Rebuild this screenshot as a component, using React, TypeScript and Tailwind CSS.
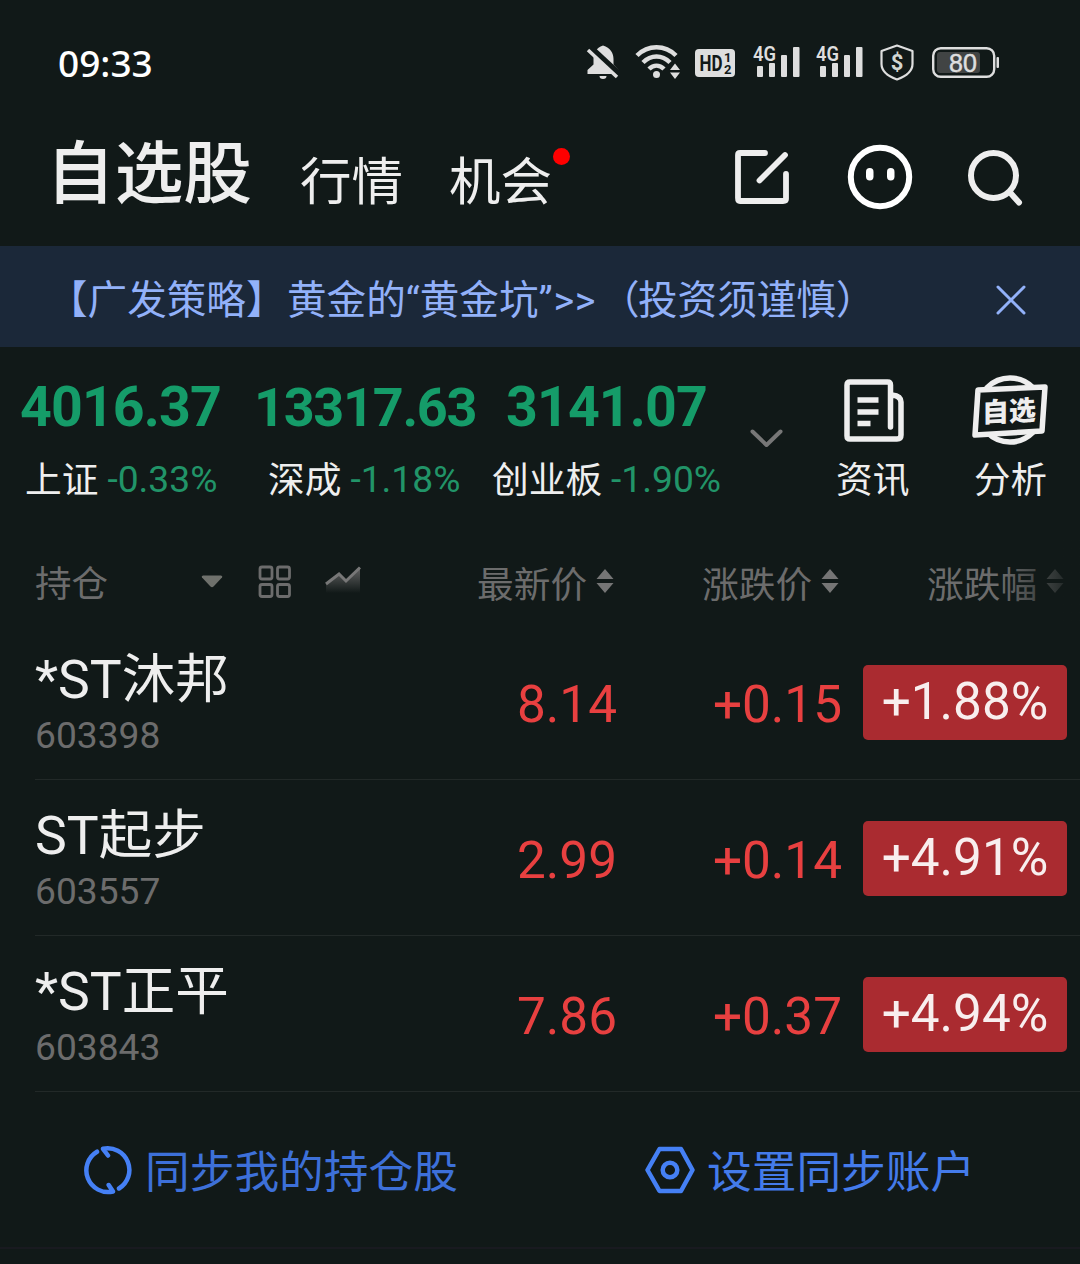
/** Watchlist page of the stock app */

interface IndexQuote {
  name: string;
  value: string;
  change: string;
  column: string;
  valueStyle: string;
  labelStyle: string;
}

interface Stock {
  name: string;
  code: string;
  price: string;
  diff: string;
  percent: string;
}

const indexes: IndexQuote[] = [
  { name: '上证', value: '4016.37', change: '-0.33%', column: 'w-[234px] pl-[20px]', valueStyle: 'text-[55.500px] tracking-[-0.9px]', labelStyle: 'pl-[5px]' },
  { name: '深成', value: '13317.63', change: '-1.18%', column: 'w-[248px] pl-[20px]', valueStyle: 'text-[54px] tracking-[-1.3px]', labelStyle: 'pl-[14px]' },
  { name: '创业板', value: '3141.07', change: '-1.90%', column: 'w-[250px] pl-[24px]', valueStyle: 'text-[55.500px] tracking-[-0.9px]', labelStyle: '-ml-[14px]' },
];

const stocks: Stock[] = [
  { name: '*ST沐邦', code: '603398', price: '8.14', diff: '+0.15', percent: '+1.88%' },
  { name: 'ST起步', code: '603557', price: '2.99', diff: '+0.14', percent: '+4.91%' },
  { name: '*ST正平', code: '603843', price: '7.86', diff: '+0.37', percent: '+4.94%' },
];

function SignalIcon() {
  return (
    <svg width="48" height="36" viewBox="0 0 48 36" fill="#dedede" className="overflow-visible">
      <text x="0" y="15.500" fontSize="20.500" fontWeight="600" textLength="23" lengthAdjust="spacingAndGlyphs" fontFamily="Roboto, sans-serif">4G</text>
      <rect x="4" y="21" width="6" height="11" rx="1" />
      <rect x="16" y="18" width="6" height="14" rx="1" />
      <rect x="28" y="10" width="6" height="22" rx="1" />
      <rect x="40" y="2" width="6.500" height="30" rx="1" />
    </svg>
  );
}

function StatusBar() {
  return (
    <div className="flex h-[126px] items-center justify-between pl-[58px] pr-[80px]">
      <span className="font-['Noto_Sans',sans-serif] text-[37px] font-medium text-white">09:33</span>
      <div className="flex items-center">
        <svg width="34" height="36" viewBox="0 0 34 36" className="mb-[3px] mr-[15px]">
          <path d="M17 1.500C10 4 7.500 9 7.500 15v5.500l-6 5.500v4h31v-4l-5-5.500V15c0-6-3-11-10.500-13.500z" fill="#dedede" />
          <path d="M13.500 32h7a3.500 3 0 0 1-7 0z" fill="#dedede" />
          <path d="M5 4l28 26" stroke="#111918" strokeWidth="6" />
          <path d="M2 6l29 27" stroke="#dedede" strokeWidth="3.500" />
        </svg>
        <svg width="46" height="36" viewBox="0 0 46 36" className="mb-[3px] mr-[14px]" fill="none" stroke="#dedede" strokeWidth="4.500">
          <path d="M2 11.500C13 0.500 30 0.500 41 11.500" />
          <path d="M8 18.500c8-8 19-8 27 0" />
          <path d="M14 25c4.500-4.500 10.500-4.500 15 0" />
          <circle cx="21.500" cy="30.500" r="3.500" fill="#dedede" stroke="none" />
          <path d="M35 26l5-6.500 5 6.500zM35 28.500l5 6.500 5-6.500z" fill="#dedede" stroke="none" />
        </svg>
        <svg width="40" height="28" viewBox="0 0 40 28" className="mr-[18px]">
          <rect width="40" height="28" rx="4" fill="#dedede" />
          <g fill="#111918" fontFamily="Roboto, sans-serif" fontWeight="700">
            <text x="4.500" y="22" fontSize="22" textLength="23" lengthAdjust="spacingAndGlyphs">HD</text>
            <text x="29" y="13" fontSize="13">1</text>
            <text x="29" y="25" fontSize="13">2</text>
          </g>
        </svg>
        <div className="mr-[15px]"><SignalIcon /></div>
        <div className="mr-[16px]"><SignalIcon /></div>
        <svg width="34" height="37" viewBox="0 0 34 37" className="mb-[2px] mr-[18px]">
          <path d="M17 1.500l15.500 5.500v13c0 7-6 12-15.500 15.500C7.500 32 1.500 27 1.500 20V7z" fill="none" stroke="#dedede" strokeWidth="2.200" strokeLinejoin="round" />
          <text x="17" y="26" textAnchor="middle" fontSize="22" fontWeight="700" fill="#d2d6d2" fontFamily="Roboto, sans-serif">$</text>
        </svg>
        <svg width="68" height="31" viewBox="0 0 68 31" className="mb-[2px]">
          <rect x="1.200" y="1.200" width="61" height="28.600" rx="7.500" fill="none" stroke="#dedede" strokeWidth="2.400" />
          <rect x="5" y="5" width="43" height="21" rx="3" fill="#414444" />
          <rect x="64.500" y="10" width="2.500" height="11" rx="1" fill="#dedede" />
          <text x="31" y="24.500" textAnchor="middle" fontSize="25" fill="#dedede" stroke="#dedede" strokeWidth="0.500" fontFamily="'Liberation Sans', sans-serif">80</text>
        </svg>
      </div>
    </div>
  );
}

function TopNav() {
  return (
    <div className="flex h-[120px] items-start justify-between pl-[46px] pr-[56px] text-[#eeeeee]">
      <div className="flex">
        <span className="mt-[9px] w-[254px] text-[68.700px] font-medium leading-[80px]">自选股</span>
        <span className="mt-[20px] w-[149px] text-[51.500px] leading-[74px]">行情</span>
        <span className="relative mt-[20px] text-[51.500px] leading-[74px]">
          机会
          <i className="absolute -right-[18px] top-[2px] size-[17px] rounded-full bg-[#ff0000]" />
        </span>
      </div>
      <div className="mt-[18px] flex items-start">
        <svg width="56" height="56" viewBox="0 0 56 56" className="mr-[57px] mt-[5px]" fill="none" stroke="#eeeeee" strokeWidth="5.800" strokeLinecap="round" strokeLinejoin="round">
          <path d="M31 4H6Q4 4 4 6v43q0 3 2 3h43q3 0 3-2V25" />
          <path d="M25.500 31.500L51 6" />
        </svg>
        <svg width="66" height="66" viewBox="0 0 66 66" className="mr-[55px]">
          <circle cx="33" cy="33" r="29.200" fill="none" stroke="#fff" strokeWidth="6" />
          <rect x="19" y="24" width="7.500" height="12.500" rx="3.700" fill="#fff" />
          <rect x="40" y="24" width="7.500" height="12.500" rx="3.700" fill="#fff" />
        </svg>
        <svg width="56" height="58" viewBox="0 0 56 58" className="mt-[5px]" fill="none" stroke="#eeeeee" strokeWidth="6" strokeLinecap="round">
          <circle cx="25.500" cy="26.500" r="22.500" />
          <path d="M42.500 44l8.500 9.500" />
        </svg>
      </div>
    </div>
  );
}

function Banner() {
  return (
    <div className="flex h-[101px] items-center justify-between bg-[#1b2839] pl-[48px] pr-[54px] text-[#92b1f9]">
      <span className="mt-[8px] flex whitespace-nowrap text-[39.600px] leading-[60px]">
        <span className="w-[239px]">【广发策略】</span>
        <span>黄金的“黄金坑”</span>
        <span className="ml-[1px] tracking-[0.5px]">&gt;&gt;</span>
        <span className="ml-[4px] w-[38px]">（</span>
        <span>投资须谨慎）</span>
      </span>
      <svg width="30" height="30" viewBox="0 0 30 30" className="mt-[6px]" stroke="currentColor" strokeWidth="3" strokeLinecap="round">
        <path d="M2 2l26 26M28 2L2 28" />
      </svg>
    </div>
  );
}

function IndexBar() {
  return (
    <div className="flex h-[193px]">
      {indexes.map((item) => (
        <div key={item.name} className={`shrink-0 pt-[28px] ${item.column}`}>
          <div className={`h-[64px] whitespace-nowrap pt-px font-bold leading-[64px] text-[#159c69] ${item.valueStyle}`}>{item.value}</div>
          <div className={`mt-[13px] flex whitespace-nowrap leading-[54px] ${item.labelStyle}`}>
            <span className="mr-[9px] mt-[2px] text-[36.700px] text-[#eeeeee]">{item.name}</span>
            <span className="text-[37.200px] text-[#219468]">{item.change}</span>
          </div>
        </div>
      ))}
      <svg width="36" height="20" viewBox="0 0 36 20" className="ml-[17px] mt-[81px] shrink-0" fill="none" stroke="#777777" strokeWidth="4" strokeLinecap="round" strokeLinejoin="round">
        <path d="M3.500 3.500l14 13.500 14-13.500" />
      </svg>
      <div className="ml-[37px] flex shrink-0 flex-col items-center pl-[14px] pt-[30px] text-[#eeeeee]">
        <svg width="62" height="66" viewBox="0 0 62 66" fill="none" stroke="#eeeeee" strokeWidth="5.500" strokeLinejoin="round" strokeLinecap="round" className="translate-x-px">
          <path d="M47.500 50V8q0-3-3-3H7Q4 5 4 8v51q0 3 3 3h47q4 0 4-4V25q0-6-9-7" />
          <path d="M14.500 23h21M14.500 35h21M14.500 46.500h13" strokeLinecap="butt" />
        </svg>
        <span className="mt-[11px] text-[36.700px] leading-[54px]">资讯</span>
      </div>
      <div className="ml-[63px] flex shrink-0 flex-col items-center pt-[26px] text-[#eeeeee]">
        <svg width="76" height="74" viewBox="0 0 76 74">
          <circle cx="38" cy="37" r="32" fill="none" stroke="#eeeeee" strokeWidth="5.500" />
          <path d="M6 17L73 14 70 58 3 62z" fill="#111918" stroke="#eeeeee" strokeWidth="5.500" strokeLinejoin="round" />
          <text x="39" y="48" textAnchor="middle" fontSize="27" fontWeight="900" fill="#eeeeee" fontFamily="'Noto Sans CJK SC', sans-serif" transform="rotate(-3 38 38) skewX(-3)">自选</text>
        </svg>
        <span className="mt-[7px] text-[36.500px] leading-[54px]">分析</span>
      </div>
    </div>
  );
}

function SortLabel({ text }: { text: string }) {
  return (
    <div className="flex w-[225px] shrink-0 items-center">
      <span className="mr-[9px] mt-[7px] text-[36.700px]">{text}</span>
      <svg width="18" height="26" viewBox="0 0 18 26" className="mb-[2px]" fill="#757575">
        <path d="M0.500 11L9 1l8.500 10zM0.500 15L9 25l8.500-10z" />
      </svg>
    </div>
  );
}

function ListHeader() {
  return (
    <div className="relative flex h-[84px] items-center overflow-hidden pl-[35px] text-[36.500px] leading-[54px] text-[#6c6c6c]">
      <span className="mt-[5px] w-[166px] shrink-0">持仓</span>
      <svg width="22" height="13" viewBox="0 0 22 13" fill="#6f716c" className="mb-[2px] mr-[35px] shrink-0">
        <path d="M2 0.500h18q2 0.500 1 2l-8.500 9q-1.500 1.300-3 0L1 2.500q-1-1.500 1-2z" />
      </svg>
      <svg width="34" height="34" viewBox="0 0 34 34" className="mb-px mr-[33px] shrink-0" fill="none" stroke="#6c6c6c" strokeWidth="2.800">
        <rect x="2" y="2" width="12" height="12" rx="2" />
        <rect x="19.500" y="2" width="12" height="12" rx="2" />
        <rect x="2" y="19.500" width="12" height="12" rx="2" />
        <rect x="19.500" y="19.500" width="12" height="12" rx="2" />
      </svg>
      <svg width="36" height="32" viewBox="0 0 36 32" className="mb-[3px] mr-[116px] shrink-0">
        <defs>
          <linearGradient id="trend" x1="0" y1="0" x2="0" y2="1">
            <stop offset="0" stopColor="#656565" />
            <stop offset="1" stopColor="#111918" />
          </linearGradient>
        </defs>
        <path d="M1 19l13-10 7 7L35 2v26H1z" fill="url(#trend)" />
        <path d="M1 19l13-10 7 7L35 2.500" fill="none" stroke="#777777" strokeWidth="3" />
      </svg>
      <SortLabel text="最新价" />
      <SortLabel text="涨跌价" />
      <SortLabel text="涨跌幅" />
      <div className="absolute inset-y-0 right-0 w-[80px] bg-linear-to-r from-[#111918]/0 to-[#111918]" />
    </div>
  );
}

function StockRow({ stock }: { stock: Stock }) {
  return (
    <div className="ml-[35px] flex h-[156px] border-b border-[#222928]">
      <div className="w-[416px] pt-[19px]">
        <div className="h-[72px] text-[53.500px] leading-[74px] text-[#eeeeee]">{stock.name}</div>
        <div className="text-[37.200px] leading-[40px] text-[#6c6c6c]">{stock.code}</div>
      </div>
      <div className="w-[166px] pt-[48px] text-right text-[51.300px] leading-[66px] text-[#e84040]">{stock.price}</div>
      <div className="w-[225px] pt-[48px] text-right text-[51.300px] leading-[66px] text-[#e84040]">{stock.diff}</div>
      <div className="ml-[21px] mt-[41px] h-[75px] w-[204px] shrink-0 rounded-[5px] bg-[#aa2b30] pt-[4px] text-center text-[51.300px] leading-[66px] text-[#f8eeee]">
        {stock.percent}
      </div>
    </div>
  );
}

function SyncActions() {
  return (
    <div className="flex h-[157px] items-center border-b-2 border-[#191a20] pl-[84px] text-[44.700px] leading-[66px] text-[#3d70d9]">
      <svg width="48" height="50" viewBox="0 0 48 50" className="mr-[13px]" fill="none" stroke="#4580f5" strokeWidth="4.500" strokeLinecap="round" strokeLinejoin="round">
        <path d="M13 6.700A21.700 21.700 0 0 0 29 46.500L24.700 40" />
        <path d="M35 43.500A21.700 21.700 0 0 0 19 3.800L24 10.500" />
      </svg>
      <span className="mt-[7px] w-[500px]">同步我的持仓股</span>
      <svg width="50" height="48" viewBox="0 0 50 48" className="mr-[12px]" fill="none" stroke="#4580f5" strokeWidth="4.500" strokeLinejoin="round">
        <path d="M14.500 3h21.500L47.500 24 36 45H14.500L2.500 24z" />
        <circle cx="25" cy="24" r="7.300" />
      </svg>
      <span className="mt-[7px] text-[44.700px] text-[#447bea]">设置同步账户</span>
    </div>
  );
}

export default function App() {
  return (
    <div className="h-[1264px] w-[1080px] overflow-hidden bg-[#111918] font-['Roboto','Noto_Sans_CJK_SC',sans-serif]">
      <StatusBar />
      <TopNav />
      <Banner />
      <IndexBar />
      <ListHeader />
      {stocks.map((stock) => (
        <StockRow key={stock.code} stock={stock} />
      ))}
      <SyncActions />
    </div>
  );
}
